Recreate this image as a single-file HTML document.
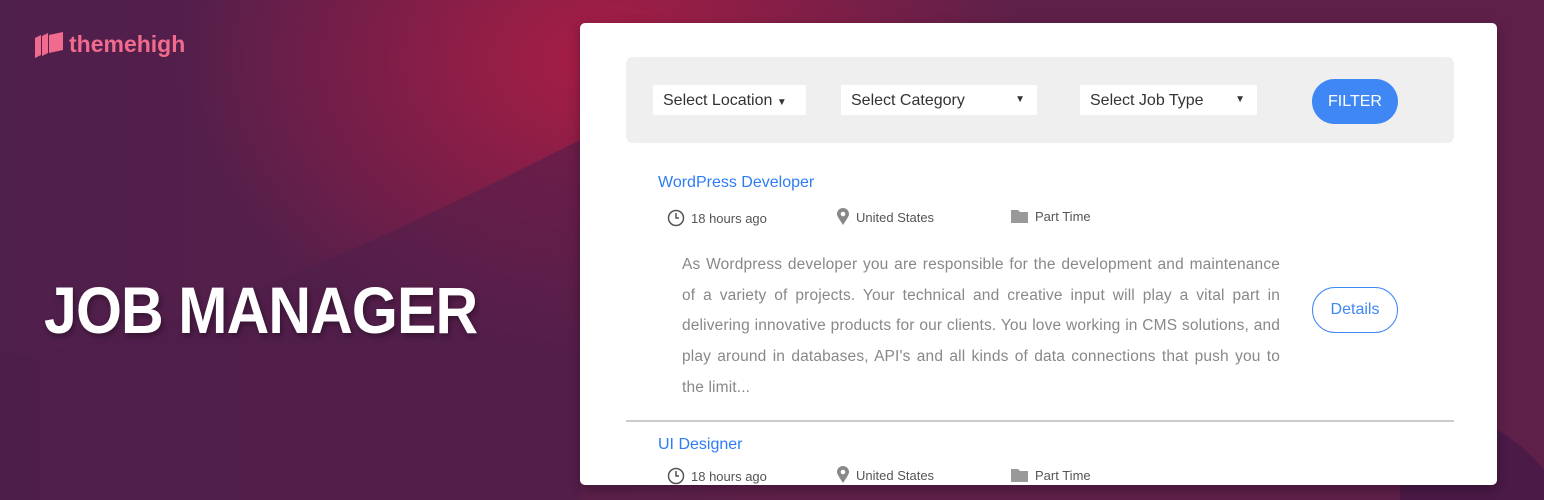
<!DOCTYPE html>
<html><head><style>
*{margin:0;padding:0;box-sizing:border-box}
body{width:1544px;height:500px;overflow:hidden;position:relative;font-family:"Liberation Sans",sans-serif;
background:radial-gradient(ellipse 420px 300px at 600px 60px,#a81d45 0%,rgba(168,29,69,0.6) 40%,rgba(94,32,73,0) 100%),linear-gradient(90deg,#4f1f4c 0%,#5e2049 50%,#5e2049 100%)}
.wave{position:absolute;left:0;top:0}
.logo{position:absolute;left:35px;top:31px;color:#f06b8d;font-size:23px;font-weight:bold;display:flex;align-items:center;gap:6px}
h1{position:absolute;left:44px;top:272px;color:#fff;font-size:66px;font-weight:bold;letter-spacing:-1px;text-shadow:2px 3px 6px rgba(0,0,0,.35);transform:scaleX(0.895);transform-origin:left}
.card{position:absolute;left:580px;top:23px;width:917px;height:462px;background:#fff;border-radius:5px;overflow:hidden;box-shadow:0 4px 12px rgba(0,0,0,.3)}
.bar{position:absolute;left:46px;top:34px;width:828px;height:86px;background:#efefef;border-radius:7px}
.sel{position:absolute;top:28px;height:30px;background:#fff;border-radius:2px;font-size:16px;color:#333;padding:7px 10px 0}
.sel b{position:absolute;right:12px;top:9px;font-size:10px}
.btn{position:absolute;left:686px;top:22px;width:86px;height:45px;border-radius:23px;background:#3f87f5;color:#fff;font-size:16px;text-align:center;line-height:45px}
.t{position:absolute;left:78px;color:#2e7cf6;font-size:16px}
.m{position:absolute;font-size:13px;color:#555;display:flex;align-items:center;gap:6px}
.d{position:absolute;left:102px;top:227px;width:598px;font-size:15.5px;letter-spacing:0.15px;line-height:30.7px;color:#888;text-align:justify}
.det{position:absolute;left:732px;top:264px;width:86px;height:46px;border:1.5px solid #3f87f5;border-radius:23px;color:#3f87f5;font-size:16px;text-align:center;line-height:43px}
.hr{position:absolute;left:46px;top:397px;width:828px;height:2px;background:#ccc}
</style></head><body>
<svg class="wave" width="1544" height="500"><path d="M0 360 C200 330 400 230 580 140 L580 500 L0 500Z" fill="#4e1e4b" opacity="0.55"/><path d="M1400 400 C1480 410 1520 440 1544 470 L1544 500 L1400 500Z" fill="#4b1a47"/></svg>
<div class="logo"><svg width="28" height="26" viewBox="0 0 28 26"><g fill="#f06b8d"><path d="M0 6 L6 3 L6 23 L0 26Z"/><path d="M7 4 L13 1 L13 21 L7 24Z"/><path d="M14 3 L28 0 L28 18 L14 21Z"/></g></svg>themehigh</div>
<h1>JOB MANAGER</h1>
<div class="card">
<div class="bar">
<div class="sel" style="left:27px;width:153px">Select Location <b style="position:static">▼</b></div>
<div class="sel" style="left:215px;width:196px">Select Category<b>▼</b></div>
<div class="sel" style="left:454px;width:177px">Select Job Type<b>▼</b></div>
<div class="btn">FILTER</div>
</div>
<div class="t" style="top:151px">WordPress Developer</div>
<div class="m" style="left:87px;top:186px"><svg width="18" height="18"><circle cx="9" cy="9" r="7.5" fill="none" stroke="#555" stroke-width="1.5"/><path d="M9 4V9H12" fill="none" stroke="#555" stroke-width="1.5"/></svg>18 hours ago</div>
<div class="m" style="left:256px;top:185px"><svg width="14" height="18"><path d="M7 17C3 11 1 8 1 6A6 6 0 0 1 13 6C13 8 11 11 7 17Z" fill="#888"/><circle cx="7" cy="6" r="2.3" fill="#fff"/></svg>United States</div>
<div class="m" style="left:431px;top:186px"><svg width="18" height="15"><path d="M0 1H7L9 3H17V14H0Z" fill="#999"/></svg>Part Time</div>
<div class="d">As Wordpress developer you are responsible for the development and maintenance of a variety of projects. Your technical and creative input will play a vital part in delivering innovative products for our clients. You love working in CMS solutions, and play around in databases, API's and all kinds of data connections that push you to the limit...</div>
<div class="det">Details</div>
<div class="hr"></div>
<div class="t" style="top:413px">UI Designer</div>
<div class="m" style="left:87px;top:444px"><svg width="18" height="18"><circle cx="9" cy="9" r="7.5" fill="none" stroke="#555" stroke-width="1.5"/><path d="M9 4V9H12" fill="none" stroke="#555" stroke-width="1.5"/></svg>18 hours ago</div>
<div class="m" style="left:256px;top:443px"><svg width="14" height="18"><path d="M7 17C3 11 1 8 1 6A6 6 0 0 1 13 6C13 8 11 11 7 17Z" fill="#888"/><circle cx="7" cy="6" r="2.3" fill="#fff"/></svg>United States</div>
<div class="m" style="left:431px;top:445px"><svg width="18" height="15"><path d="M0 1H7L9 3H17V14H0Z" fill="#999"/></svg>Part Time</div>
</div>
</body></html>
